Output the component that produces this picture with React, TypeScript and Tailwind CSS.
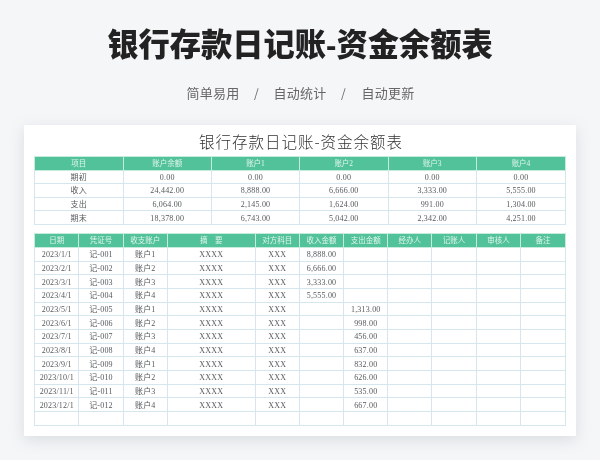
const top = [
  ["期初", "0.00", "0.00", "0.00", "0.00", "0.00"],
  ["收入", "24,442.00", "8,888.00", "6,666.00", "3,333.00", "5,555.00"],
  ["支出", "6,064.00", "2,145.00", "1,624.00", "991.00", "1,304.00"],
  ["期末", "18,378.00", "6,743.00", "5,042.00", "2,342.00", "4,251.00"],
];
const topHead = ["项目", "账户余额", "账户1", "账户2", "账户3", "账户4"];
const head = ["日期", "凭证号", "收支账户", "摘　要", "对方科目", "收入金额", "支出金额", "经办人", "记账人", "审核人", "备注"];
const widths = [44, 44.5, 44, 88, 44, 44.5, 44, 44, 44.5, 44.5, 44.5];
const income = ["8,888.00", "6,666.00", "3,333.00", "5,555.00", "", "", "", "", "", "", "", ""];
const outgo = ["", "", "", "", "1,313.00", "998.00", "456.00", "637.00", "832.00", "626.00", "535.00", "667.00"];
const accounts = ["账户1", "账户2", "账户3", "账户4"];
const rows = income.map((inc, i) => [
  `2023/${i + 1}/1`,
  `记-${String(i + 1).padStart(3, "0")}`,
  accounts[i % 4],
  "XXXX",
  "XXX",
  inc,
  outgo[i],
  "",
  "",
  "",
  "",
]);
rows.push(["", "", "", "", "", "", "", "", "", "", ""]);

function Table({ header, body, cols, className }: { header: string[]; body: string[][]; cols: number[]; className?: string }) {
  return (
    <table className={`table-fixed w-[531px] border-collapse ${className ?? ""}`}>
      <colgroup>
        {cols.map((w, i) => (
          <col key={i} style={{ width: w }} />
        ))}
      </colgroup>
      <thead>
        <tr className="h-[14px] bg-[#52c29b]">
          {header.map((h, i) => (
            <th key={i} className="border border-[#c4ebdc] p-0 pt-[1px] text-center text-[7.5px] leading-none font-normal text-[#dff5ec]">
              {h}
            </th>
          ))}
        </tr>
      </thead>
      <tbody>
        {body.map((r, i) => (
          <tr key={i} className="h-[13.67px]">
            {r.map((c, j) => (
              <td key={j} className="border border-[#d6e6ee] p-0 pt-[2px] text-center text-[8px] leading-none tracking-[0.2px] whitespace-nowrap text-[#55595b]">
                {c}
              </td>
            ))}
          </tr>
        ))}
      </tbody>
    </table>
  );
}

export default function App() {
  return (
    <div className="flex h-[460px] w-[600px] flex-col items-center overflow-hidden bg-[#f5f6f8] blur-[0.35px]">
      <h1
        className="mt-[27px] h-[38px] text-[31.25px] leading-[38px] font-black whitespace-nowrap text-[#222222]"
        style={{ fontFamily: '"Liberation Sans","Noto Sans CJK SC",sans-serif' }}
      >
        银行存款日记账-资金余额表
      </h1>
      <div
        className="mt-[18px] ml-[1px] flex h-[20px] items-center text-[13px] leading-[20px] tracking-[0.25px] text-[#666666]"
        style={{ fontFamily: '"Noto Sans CJK SC",sans-serif' }}
      >
        <span>简单易用</span>
        <span className="mx-[14px] w-[6px] text-center text-[12px]">/</span>
        <span>自动统计</span>
        <span className="ml-[14px] mr-[15px] w-[6px] text-center text-[12px]">/</span>
        <span>自动更新</span>
      </div>
      <div
        className="mt-[22px] flex h-[311px] w-[552px] flex-col items-center bg-white shadow-[0_4px_14px_rgba(120,130,140,0.22)]"
        style={{ fontFamily: '"Liberation Serif","Noto Sans CJK SC",serif' }}
      >
        <div
          className="mt-[5px] ml-[2px] h-[25.5px] text-[15.5px] leading-[22px] font-light tracking-[1px] whitespace-nowrap text-[#333333]"
          style={{ fontFamily: '"Noto Sans CJK SC",serif' }}
        >
          银行存款日记账-资金余额表
        </div>
        <Table header={topHead} body={top} cols={[88.5, 88.5, 88, 88.5, 88.5, 89]} />
        <Table header={head} body={rows} cols={widths} className="mt-[8px]" />
      </div>
    </div>
  );
}
